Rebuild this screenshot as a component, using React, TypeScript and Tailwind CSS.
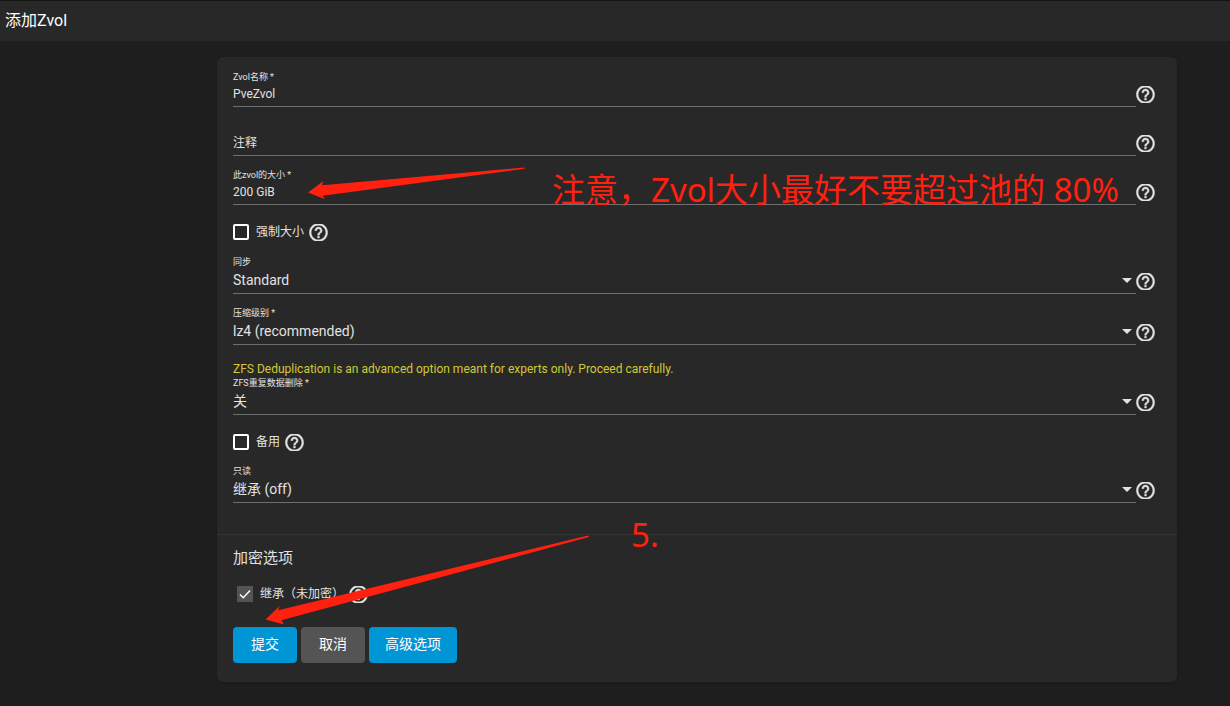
import React, { useState } from 'react';

// Help icon shown next to every control
const HelpIcon = () => (
  <svg className="w-[19px] h-[17px] shrink-0" viewBox="1.6 2.7 20.8 18.6" fill="currentColor" aria-hidden="true">
    <path
      stroke="currentColor"
      strokeWidth="0.4"
      d="M11 18h2v-2h-2v2zm1-16C6.48 2 2 6.48 2 12s4.48 10 10 10 10-4.48 10-10S17.52 2 12 2zm0 18c-4.41 0-8-3.59-8-8s3.59-8 8-8 8 3.59 8 8-3.59 8-8 8zm0-14c-2.21 0-4 1.79-4 4h2c0-1.1.9-2 2-2s2 .9 2 2c0 2-3 1.75-3 5h2c0-2.25 3-2.5 3-5 0-2.21-1.79-4-4-4z"
    />
  </svg>
);

const HelpButton = () => (
  <button type="button" aria-label="帮助" className="flex w-5 h-[25px] shrink-0 items-center justify-start">
    <HelpIcon />
  </button>
);

interface FieldProps {
  id: string;
  label: string;
  value: string;
}

const InputField: React.FC<FieldProps> = ({ id, label, value }) => {
  const [text, setText] = useState(value);

  return (
    <div className="flex items-end">
      <div className="flex flex-1 flex-col border-b border-[#6f6f6f]">
        <label htmlFor={id} className="text-[9px] leading-3">{label}</label>
        <input
          id={id}
          value={text}
          onChange={(e) => setText(e.target.value)}
          className="h-[23px] w-full bg-transparent pb-px text-xs outline-none"
        />
      </div>
      <HelpButton />
    </div>
  );
};

// Empty field: the label rests in the place of the value
const EmptyField: React.FC<{ id: string; label: string }> = ({ id, label }) => (
  <div className="flex items-end">
    <div className="flex flex-1 border-b border-[#6f6f6f] pt-3">
      <label htmlFor={id} className="text-xs leading-[23px]">{label}</label>
      <input id={id} className="h-[23px] flex-1 bg-transparent text-xs outline-none" />
    </div>
    <HelpButton />
  </div>
);

const SelectField: React.FC<FieldProps & { options: string[] }> = ({ id, label, value, options }) => (
  <div className="flex items-end">
    <div className="relative flex flex-1 flex-col border-b border-[#6f6f6f]">
      <label htmlFor={id} className="text-[9px] leading-3">{label}</label>
      <select id={id} defaultValue={value} className="h-[25px] w-full appearance-none bg-transparent pb-[2px] text-sm outline-none">
        {options.map((option) => (
          <option key={option} className="bg-[#282828]">{option}</option>
        ))}
      </select>
      <svg className="pointer-events-none absolute right-1 bottom-[10px] w-[10px] h-[5px]" viewBox="0 0 10 5" fill="currentColor">
        <path d="M0 0h10L5 5z" />
      </svg>
    </div>
    <HelpButton />
  </div>
);

const CheckboxField: React.FC<{ id: string; label: string }> = ({ id, label }) => (
  <div className="flex h-6 items-center">
    <input id={id} type="checkbox" className="h-4 w-4 appearance-none rounded-xs border-2 border-white checked:bg-[#545454]" />
    <label htmlFor={id} className="ml-[7px] mr-[5px] text-xs">{label}</label>
    <HelpButton />
  </div>
);

export default function App() {
  const [inherit, setInherit] = useState(true);

  return (
    <div className="relative min-h-screen bg-[#1e1e1e] font-['Roboto','Noto_Sans_CJK_SC',sans-serif] text-[#e2e2e2]">
      <header className="flex h-[41px] items-center border-t border-[#141414] bg-[#282828] px-[5px]">
        <h1 className="text-base leading-6 text-white">添加Zvol</h1>
      </header>

      <main className="pt-4 pb-6 pl-[217px] pr-[53px]">
        <form onSubmit={(e) => e.preventDefault()} className="rounded-md bg-[#282828] pt-[14px] pb-[19px] shadow-sm">
          <div className="flex flex-col pl-4 pr-[21px]">
            <div className="flex flex-col gap-[13px]">
              <InputField id="name" label="Zvol名称 *" value="PveZvol" />
              <EmptyField id="comments" label="注释" />
              <InputField id="size" label="此zvol的大小 *" value="200 GiB" />
            </div>

            <div className="pt-[15px] pb-3">
              <CheckboxField id="force-size" label="强制大小" />
            </div>

            <div className="flex flex-col gap-[13px]">
              <SelectField id="sync" label="同步" value="Standard" options={['Inherit', 'Standard', 'Always', 'Disabled']} />
              <SelectField id="compression" label="压缩级别 *" value="lz4 (recommended)" options={['off', 'lz4 (recommended)', 'zstd']} />
            </div>

            <p className="mt-4 text-xs leading-4 text-[#d3c936]">
              ZFS Deduplication is an advanced option meant for experts only. Proceed carefully.
            </p>
            <SelectField id="dedup" label="ZFS重复数据删除 *" value="关" options={['开', '验证', '关']} />

            <div className="pt-[15px] pb-[11px]">
              <CheckboxField id="sparse" label="备用" />
            </div>

            <SelectField id="readonly" label="只读" value="继承 (off)" options={['继承 (off)', '开', '关']} />
          </div>

          {/* Encryption */}
          <section className="mt-[31px] border-t border-[#333333] px-4 pt-[11px]">
            <h2 className="text-[15px] leading-6">加密选项</h2>
            <div className="mt-3 flex h-6 items-center pl-1">
              <span className="relative flex h-4 w-4">
                <input
                  id="inherit"
                  type="checkbox"
                  checked={inherit}
                  onChange={(e) => setInherit(e.target.checked)}
                  className="h-4 w-4 appearance-none bg-[#545454]"
                />
                {inherit && (
                  <svg className="pointer-events-none absolute inset-0 h-4 w-4" viewBox="0 0 16 16" fill="none" stroke="white" strokeWidth="1.5">
                    <path d="M3 8.5l3.3 3.2L13 4.5" />
                  </svg>
                )}
              </span>
              <label htmlFor="inherit" className="ml-[7px] mr-[5px] text-xs">继承（未加密）</label>
              <HelpButton />
            </div>

            <div className="mt-[21px] flex gap-1 text-sm text-white">
              <button type="submit" className="h-9 w-16 rounded bg-[#0095d5] pb-[2px]">提交</button>
              <button type="button" className="h-9 w-16 rounded bg-[#545454] pb-[2px]">取消</button>
              <button type="button" className="h-9 w-[88px] rounded bg-[#0095d5] pb-[2px]">高级选项</button>
            </div>
          </section>
        </form>
      </main>

      {/* Annotations drawn over the form */}
      <div className="pointer-events-none absolute inset-0 overflow-hidden font-['Noto_Sans','Noto_Sans_CJK_SC',sans-serif] text-[33px] leading-10 text-[#ff2010]">
        <svg className="absolute top-0 left-0 h-[706px] w-[700px]" viewBox="0 0 700 706" fill="currentColor">
          <path d="M308 192.5L323.5 181L322 185.3L524 167.5L525 168.8L322.5 195.8L325 199.2Z" />
          <path d="M265.5 619.5L279.5 606L278.3 610.3L588 535.5L589 537L281.3 620.3L284 624.5Z" />
        </svg>
        <span className="absolute top-[170px] left-[552px] whitespace-nowrap">注意，Zvol大小最好不要超过池的 80%</span>
        <span className="absolute top-[515px] left-[631px]">5.</span>
      </div>
    </div>
  );
}
